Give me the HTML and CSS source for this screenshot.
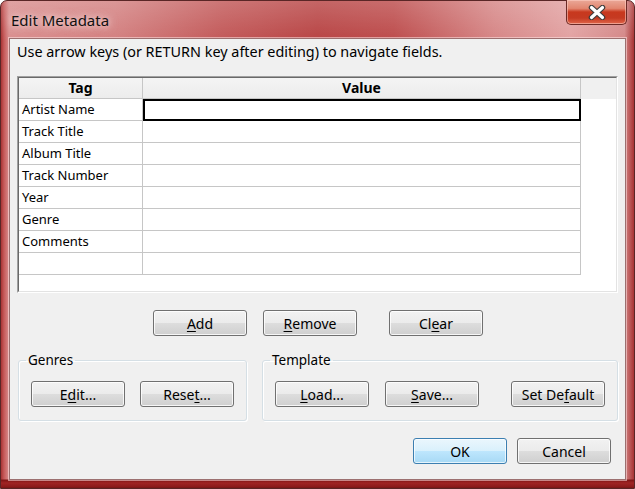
FILE: index.html
```html
<!DOCTYPE html>
<html>
<head>
<meta charset="utf-8">
<link rel="stylesheet" href="styles.css">
</head>
<body>
<div class="window">
  <div class="titlebar">
    <span class="title">Edit Metadata</span>
    <div class="close">
      <svg width="20" height="15" viewBox="0 0 20 15">
        <path d="M4.5 2.5 L15.5 12.5 M15.5 2.5 L4.5 12.5" stroke="#3c3c3c" stroke-width="5.5" stroke-linecap="round"/>
        <path d="M4.5 2.5 L15.5 12.5 M15.5 2.5 L4.5 12.5" stroke="#ffffff" stroke-width="3.2" stroke-linecap="round"/>
      </svg>
    </div>
  </div>
  <div class="client">
    <p class="hint">Use arrow keys (or RETURN key after editing) to navigate fields.</p>
    <div class="grid-box">
      <div class="grid-inner">
        <div class="grid-head">
          <div class="hcell tag">Tag</div>
          <div class="hcell val">Value</div>
        </div>
        <div class="row"><div class="cell tag">Artist Name</div><div class="cell val sel"></div></div>
        <div class="row"><div class="cell tag">Track Title</div><div class="cell val"></div></div>
        <div class="row"><div class="cell tag">Album Title</div><div class="cell val"></div></div>
        <div class="row"><div class="cell tag">Track Number</div><div class="cell val"></div></div>
        <div class="row"><div class="cell tag">Year</div><div class="cell val"></div></div>
        <div class="row"><div class="cell tag">Genre</div><div class="cell val"></div></div>
        <div class="row"><div class="cell tag">Comments</div><div class="cell val"></div></div>
        <div class="row"><div class="cell tag"></div><div class="cell val"></div></div>
      </div>
    </div>
    <div class="actions">
      <button class="btn btn-add"><u>A</u>dd</button>
      <button class="btn btn-remove"><u>R</u>emove</button>
      <button class="btn btn-clear">Cl<u>e</u>ar</button>
    </div>
    <div class="groups">
      <fieldset class="group genres">
        <legend>Genres</legend>
        <div class="group-buttons">
          <button class="btn">E<u>d</u>it...</button>
          <button class="btn gap-s">Rese<u>t</u>...</button>
        </div>
      </fieldset>
      <fieldset class="group template">
        <legend>Template</legend>
        <div class="group-buttons">
          <button class="btn"><u>L</u>oad...</button>
          <button class="btn gap-m"><u>S</u>ave...</button>
          <button class="btn gap-l">Set De<u>f</u>ault</button>
        </div>
      </fieldset>
    </div>
    <div class="footer">
      <button class="btn default">OK</button>
      <button class="btn btn-cancel">Cancel</button>
    </div>
  </div>
</div>
</body>
</html>
```
FILE: styles.css
```css
* { box-sizing: border-box; }
html, body { margin: 0; padding: 0; }
body {
  width: 635px;
  height: 489px;
  overflow: hidden;
  background: #ffffff;
  font-family: "Noto Sans", "Open Sans", "DejaVu Sans", sans-serif;
  font-size: 14px;
  color: #000;
}
.window {
  width: 635px;
  height: 489px;
  border-radius: 7px 7px 0 0;
  border: 1px solid #5a2626;
  display: flex;
  flex-direction: column;
  background:
    linear-gradient(180deg, rgba(255,255,255,0.18) 0px, rgba(255,255,255,0) 40px, rgba(0,0,0,0) 478px, #7e1414 479px, #a02424 482px, #8a1a1a 486px, #5a1010 488px),
    linear-gradient(90deg, #a83434 0px, #c65a5a 3px, #d98e8e 8px, #d38080 18%, #c25858 35%, #b84444 50%, #bd4c4c 62%, #d68686 78%, #e2a2a2 90%, #d48888 98.5%, #a83434 100%);
}
.titlebar {
  height: 37px;
  display: flex;
  align-items: flex-start;
  padding-left: 10px;
  flex: none;
}
.title {
  margin-top: 10px;
  font-size: 15px;
  line-height: 18px;
  color: #111;
  text-shadow: 0 0 6px rgba(255,235,235,0.9), 0 0 12px rgba(255,235,235,0.7);
}
.close {
  margin-left: auto;
  margin-right: 7px;
  margin-top: -1px;
  width: 61px;
  height: 25px;
  border: 1px solid #6b2a26;
  border-top: none;
  border-radius: 0 0 5px 5px;
  display: flex;
  align-items: center;
  justify-content: center;
  background: linear-gradient(180deg, #eaa898 0%, #e28670 35%, #c8381e 50%, #c53a22 75%, #e0664a 100%);
  box-shadow: inset 0 0 0 1px rgba(255,210,200,0.55);
}
.close svg { display: block; margin-top: 1px; }
.client {
  margin: 0 8px 0 8px;
  height: 442px;
  flex: none;
  background: #f0f0f0;
  border: 1px solid #9c7070;
  box-shadow: 0 0 0 1px rgba(255,230,230,0.55);
  display: flex;
  flex-direction: column;
}
.hint {
  margin: 5px 0 0 7px;
  font-size: 14.4px;
  line-height: 16px;
  white-space: nowrap;
}
.grid-box {
  margin: 16px 0 0 7px;
  width: 601px;
  height: 217px;
  border: 1px solid;
  border-color: #a0a0a0 #ffffff #ffffff #a0a0a0;
  flex: none;
}
.grid-inner {
  width: 100%;
  height: 100%;
  border: 1px solid;
  border-color: #696969 #e3e3e3 #e3e3e3 #696969;
  background: #fff;
  overflow: hidden;
}
.grid-head {
  display: flex;
  height: 21px;
  background: #f0f0f0;
}
.hcell {
  border-right: 1px solid #c6c6c6;
  border-bottom: 1px solid #c6c6c6;
  font-weight: bold;
  text-align: center;
  line-height: 20px;
  background: linear-gradient(180deg, #f4f4f4, #ececec);
}
.tag { width: 124px; flex: none; }
.val { width: 438px; flex: none; }
.row {
  display: flex;
  height: 22px;
}
.cell {
  border-right: 1px solid #c6c6c6;
  border-bottom: 1px solid #c6c6c6;
  font-size: 13px;
  line-height: 20px;
  padding-left: 3px;
  white-space: nowrap;
}
.cell.sel {
  border: 2px solid #000;
}
.actions {
  display: flex;
  margin: 17px 0 0 143px;
  flex: none;
}
.btn {
  width: 94px;
  height: 26px;
  padding: 0;
  font-family: inherit;
  font-size: 14px;
  color: #000;
  border: 1px solid #707070;
  border-radius: 3px;
  background: linear-gradient(180deg, #f2f2f2 0%, #ebebeb 50%, #dddddd 51%, #cfcfcf 100%);
  box-shadow: inset 0 0 0 1px rgba(255,255,255,0.8);
  flex: none;
}
.btn u { text-decoration-thickness: 1px; text-underline-offset: 2px; }
.btn-remove { margin-left: 16px; }
.btn-clear { margin-left: 32px; }
.groups {
  display: flex;
  margin-top: 16px;
  flex: none;
}
.group {
  margin: 0;
  padding: 0 0 0 7px;
  border: 1px solid #d5dfe5;
  border-radius: 3px;
  height: 69px;
  box-shadow: inset 1px 1px 0 #fff, 1px 1px 0 #fff;
  min-width: 0;
}
.group legend {
  padding: 0 2px;
  line-height: 16px;
  font-size: 13.5px;
}
.genres { margin-left: 8px; width: 229px; }
.template { margin-left: 15px; width: 356px; }
.group-buttons {
  display: flex;
  margin: 13px 0 0 5px;
}
.gap-s { margin-left: 15px; }
.gap-m { margin-left: 16px; }
.gap-l { margin-left: 32px; }
.footer {
  display: flex;
  justify-content: flex-end;
  margin-top: 17px;
  padding-right: 14px;
  flex: none;
}
.btn-cancel { margin-left: 10px; }
.btn.default {
  border-color: #3c7fb1;
  background: linear-gradient(180deg, #eaf6fd 0%, #d9f0fc 50%, #bee6fd 51%, #a7d9f5 100%);
  box-shadow: inset 0 0 0 1px rgba(255,255,255,0.7);
}
```
